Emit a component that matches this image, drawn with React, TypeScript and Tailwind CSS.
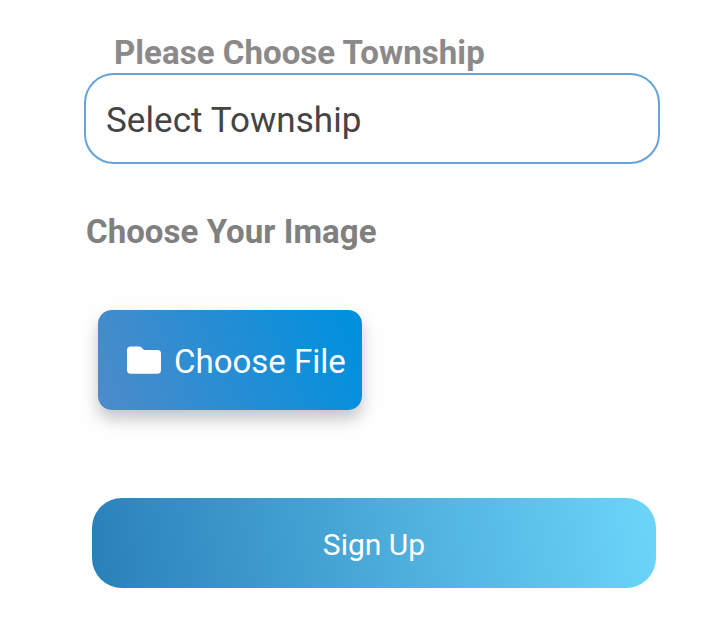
export default function App() {
  return (
    <main className="h-[634px] w-[717px] overflow-hidden bg-[#fefefe] font-['Roboto',sans-serif] antialiased">
      <label className="ml-[114px] block pt-[33px] text-[33px] leading-[40px] font-bold tracking-[0.05px] whitespace-nowrap text-[#8b8989]">Please Choose Township</label>
      <div className="ml-[84px] flex h-[91px] w-[576px] items-center rounded-[30px] border-2 border-[#66a3d6] pt-1 pl-[20px] text-[35px] leading-[40px] tracking-[0.07px] whitespace-nowrap text-[#444]">
        <span>Select Township</span>
      </div>
      <h2 className="mt-[48px] ml-[86px] text-[33px] leading-[40px] font-bold tracking-[0.05px] whitespace-nowrap text-[#808080]">Choose Your Image</h2>
      <button className="mt-[58px] ml-[98px] flex h-[100px] w-[264px] items-center rounded-[14px] bg-[linear-gradient(68deg,#4a8bca_5%,#0090de_96%)] pl-[29px] text-[33px] leading-[40px] whitespace-nowrap text-white shadow-[0_9px_16px_rgba(0,0,0,0.23)]">
        <svg className="mr-[13px] h-[28px] w-[34px]" viewBox="0 0 34 28" fill="white">
          <path d="M4 .5H12Q13.5 .5 14.5 1.5L17 4H30.5Q34 4 34 7.5V24Q34 27.7 30.5 27.7H3.5Q0 27.7 0 24V4.2Q0 .5 4 .5Z" />
        </svg>
        <span className="pt-[4px]">Choose File</span>
      </button>
      <button className="mt-[88px] ml-[92px] flex h-[90px] w-[564px] items-center justify-center rounded-[30px] bg-[linear-gradient(80deg,#2980b9,#6dd5fa)] pt-[2px] text-[30px] text-white">
        <span>Sign Up</span>
      </button>
    </main>
  );
}
